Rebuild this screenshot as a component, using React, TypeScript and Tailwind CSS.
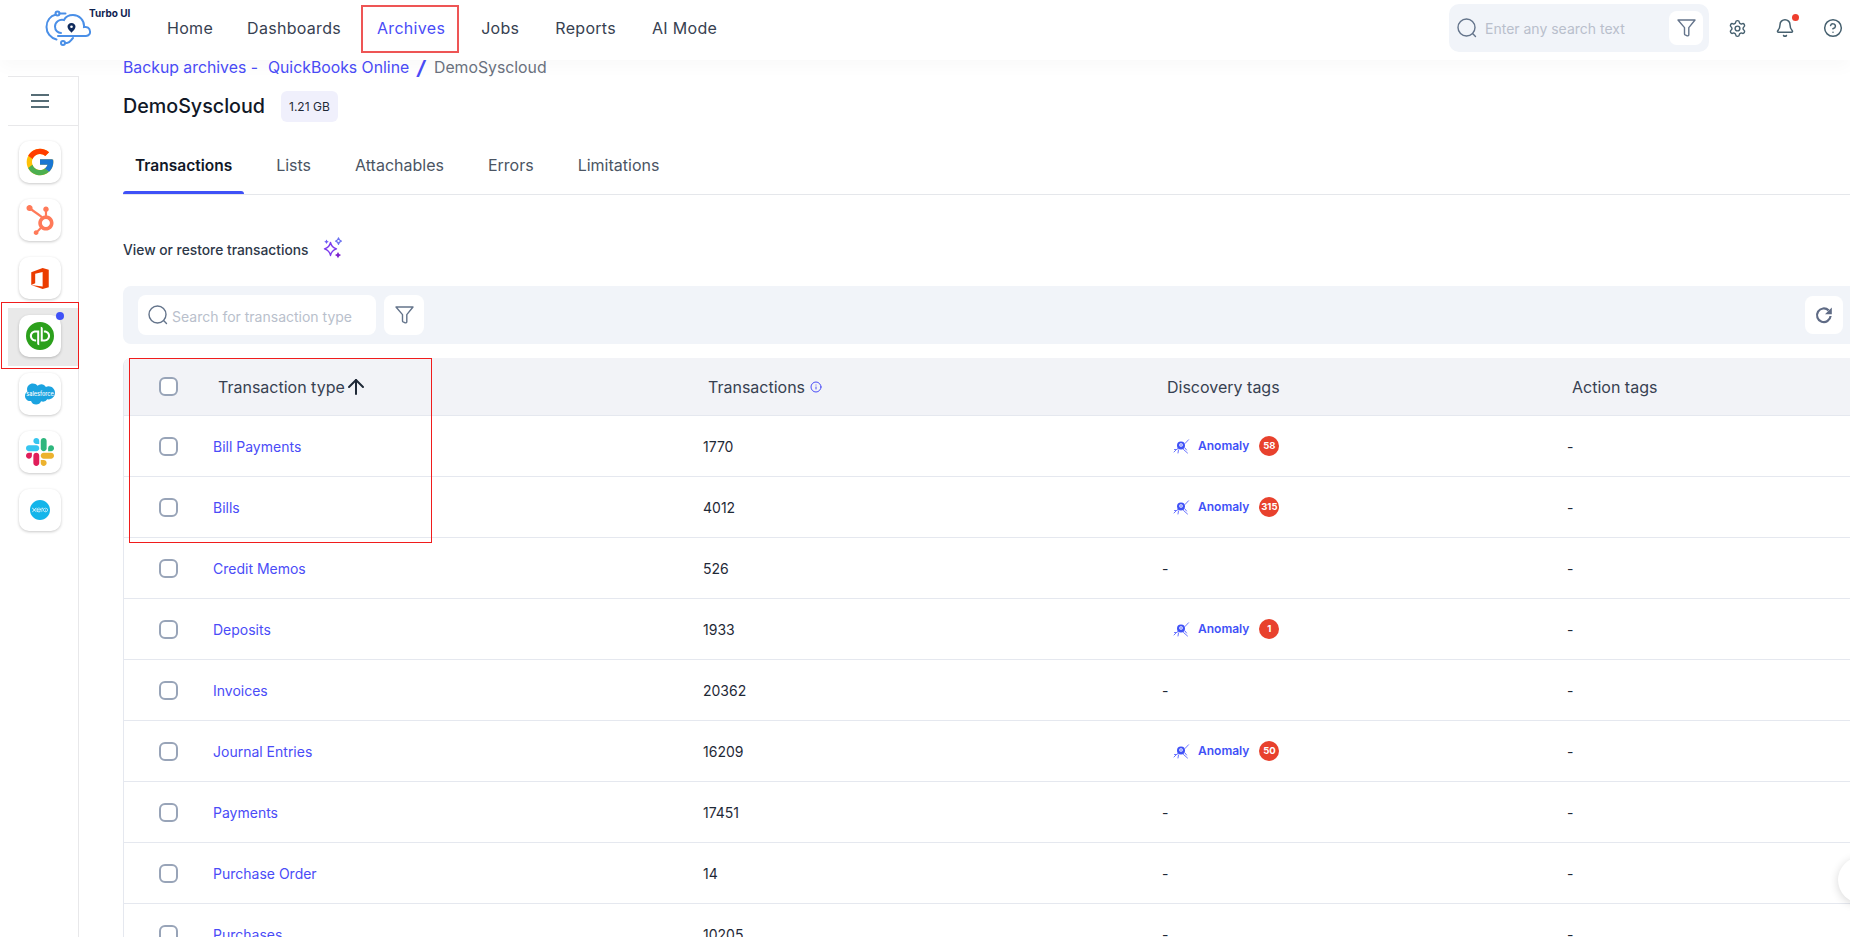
import { ArrowUp, Bell, CircleHelp, Info, Settings } from "lucide-react";
import { FcGoogle } from "react-icons/fc";
import { FaHubspot } from "react-icons/fa";
import { SiQuickbooks, SiSalesforce, SiXero } from "react-icons/si";

const navItems = ["Home", "Dashboards", "Archives", "Jobs", "Reports", "AI Mode"];
const tabs = ["Transactions", "Lists", "Attachables", "Errors", "Limitations"];

const rows = [
  { name: "Bill Payments", count: "1770", anomaly: "58" },
  { name: "Bills", count: "4012", anomaly: "315" },
  { name: "Credit Memos", count: "526" },
  { name: "Deposits", count: "1933", anomaly: "1" },
  { name: "Invoices", count: "20362" },
  { name: "Journal Entries", count: "16209", anomaly: "50" },
  { name: "Payments", count: "17451" },
  { name: "Purchase Order", count: "14" },
  { name: "Purchases", count: "10205" },
];

const SearchIcon = () => (
  <svg width="20" height="20" viewBox="0 0 20 20" fill="none" stroke="#64748b" strokeWidth="1.4" strokeLinecap="round">
    <circle cx="9.5" cy="9.5" r="8.5" />
    <path d="M15.8 15.8 18.5 18.5" />
  </svg>
);

const FunnelIcon = () => (
  <svg width="19" height="18" viewBox="0 0 19 18" fill="none" stroke="#64748b" strokeWidth="1.4" strokeLinejoin="round">
    <path d="M1 1h17l-6.2 7.6v7.2c0 .9-.9 1.2-1.6 1l-2-.9c-.4-.2-.7-.5-.7-1V8.6L1 1z" />
  </svg>
);

const RefreshIcon = () => (
  <svg width="18" height="18" viewBox="0 0 18 18" fill="none" stroke="#5f6b85" strokeWidth="2.2">
    <path d="M13.6 4.4A6.800 6.800 0 1 0 15.600 10" />
    <path d="M16.800 1.500v6.800H10z" fill="#5f6b85" stroke="none" />
  </svg>
);

const TurboLogo = () => (
  <svg width="46" height="38" viewBox="0 0 46 38" fill="none" stroke="#4a8fe7" strokeWidth="2" strokeLinecap="round">
    <path d="M11 5.500C5 7 1.500 12 1.500 18c0 6 4 11 10 12.500" />
    <path d="M13 27h28c3 0 4.500-2.500 4-5-.5-3-3-4.500-6-4 .5-7-5-12-11-12-4 0-7.500 2-9 5-5-1-9 2-9 6.500 0 4 3 6.500 6 6.500" />
    <circle cx="12.500" cy="4.500" r="2" />
    <path d="M14.500 4.500h6" />
    <circle cx="18" cy="34" r="2" />
    <path d="M20 34h2c3 0 4-3 6-5" />
    <path d="M26.500 14c-2.500 0-4 1.800-4 3.800 0 2.200 2.400 4.200 4 6 1.600-1.800 4-3.800 4-6 0-2-1.500-3.800-4-3.800z" fill="#0f2a5c" stroke="none" />
    <circle cx="26.500" cy="17.800" r="1.300" fill="#fff" stroke="none" />
  </svg>
);

const OfficeLogo = () => (
  <svg width="18" height="21" viewBox="0 0 20 24" fill="#eb3c00">
    <path d="M0 19.500V4.800L13 0l7 2v20l-7 2-13-4.500 13 1.700V4.600L4.500 6.500v10.800L0 19.500z" />
  </svg>
);

const SlackLogo = () => (
  <svg width="28" height="28" viewBox="0 0 122.800 122.800">
    <path d="M25.800 77.600c0 7.100-5.800 12.900-12.900 12.900S0 84.700 0 77.600s5.800-12.900 12.900-12.900h12.900v12.900z" fill="#e01e5a" />
    <path d="M32.300 77.600c0-7.100 5.800-12.900 12.900-12.900s12.900 5.800 12.900 12.900v32.300c0 7.100-5.800 12.900-12.900 12.900s-12.900-5.800-12.900-12.900V77.600z" fill="#e01e5a" />
    <path d="M45.200 25.800c-7.100 0-12.900-5.800-12.900-12.900S38.100 0 45.200 0s12.900 5.800 12.900 12.900v12.900H45.200z" fill="#36c5f0" />
    <path d="M45.200 32.300c7.100 0 12.900 5.800 12.900 12.900s-5.800 12.900-12.900 12.900H12.900C5.800 58.100 0 52.300 0 45.200s5.800-12.900 12.900-12.900h32.300z" fill="#36c5f0" />
    <path d="M97 45.200c0-7.100 5.800-12.900 12.900-12.900s12.900 5.800 12.900 12.900-5.800 12.900-12.900 12.900H97V45.200z" fill="#2eb67d" />
    <path d="M90.500 45.200c0 7.100-5.800 12.900-12.900 12.900s-12.900-5.800-12.900-12.900V12.900C64.700 5.800 70.500 0 77.600 0s12.900 5.800 12.900 12.900v32.300z" fill="#2eb67d" />
    <path d="M77.600 97c7.100 0 12.900 5.800 12.900 12.900s-5.800 12.900-12.900 12.900-12.900-5.800-12.900-12.900V97h12.900z" fill="#ecb22e" />
    <path d="M77.600 90.500c-7.100 0-12.900-5.800-12.900-12.900s5.800-12.900 12.900-12.900h32.300c7.100 0 12.900 5.800 12.900 12.900s-5.800 12.900-12.900 12.900H77.600z" fill="#ecb22e" />
  </svg>
);

const Sparkles = () => (
  <svg width="22" height="22" viewBox="0 0 22 22" fill="none" stroke="#7c3aed" strokeWidth="1.400" strokeLinejoin="round">
    <path d="M8.500 5.500c.7 3.600 2.300 5.200 6 6.300-3.700 1.100-5.300 2.800-6 6.700-.7-3.900-2.300-5.600-6-6.700 3.700-1.100 5.300-2.700 6-6.300z" />
    <path d="M16.500 1c.3 1.800 1.100 2.600 2.800 3.100-1.700.5-2.500 1.300-2.800 3.100-.3-1.800-1.100-2.600-2.800-3.100 1.700-.5 2.500-1.300 2.800-3.100z" stroke="#6b72f0" />
    <path d="M4.500 2.500l.8 1.500 1.500.8-1.500.8-.8 1.500-.8-1.500-1.500-.8 1.500-.8z" fill="#6d5cf5" stroke="none" />
    <path d="M16 15l1.100 2 2 1.100-2 1.100-1.100 2-1.100-2-2-1.100 2-1.100z" fill="#7e22ce" stroke="none" />
  </svg>
);

const BugIcon = () => (
  <svg width="17" height="15" viewBox="0 0 17 15" fill="none" stroke="#6a74ff" strokeWidth="1" strokeLinecap="round">
    <circle cx="8" cy="6.500" r="4" fill="#3f51f7" stroke="none" />
    <circle cx="8" cy="6" r="1.800" fill="#fff" stroke="none" />
    <circle cx="8" cy="6" r="0.800" fill="#3f51f7" stroke="none" />
    <path d="M12 4.500 15.500.8M4.500 9.500 1 13M1.500 10.500 4 10.500M5.500 11 5 14M10.500 10.500l4 3.500M12 9l1.500 2" />
  </svg>
);

const CheckBox = () => <span className="block w-[19px] h-[19px] rounded-[6px] border-2 border-[#98a4b8] bg-white" />;

const ConnectorTile = ({ children, dot }: { children: React.ReactNode; dot?: boolean }) => (
  <div className="relative w-[42px] h-[42px] rounded-[10px] bg-white flex items-center justify-center shadow-[0_1px_3px_rgba(0,0,0,0.22)]">
    {children}
    {dot && <span className="absolute -top-[3px] -right-[3px] w-2 h-2 rounded-full bg-[#3f51f7]" />}
  </div>
);

export default function App() {
  return (
    <div className="relative w-full h-[937px] overflow-hidden bg-white flex flex-col font-['Inter',sans-serif] text-[#1f2937]">
      <header className="relative z-10 h-[60px] shrink-0 bg-white flex items-center pb-1 shadow-[0_8px_14px_rgba(0,0,0,0.025)]">
        <div className="relative w-[149px] shrink-0 flex items-center pl-[45px]">
          <TurboLogo />
          <span className="absolute left-[89px] -top-[3px] text-[10px] font-bold text-[#0f2350]">Turbo UI</span>
        </div>
        <nav className="flex items-center">
          {navItems.map((item) => (
            <a
              key={item}
              href="#"
              className={`pl-[18px] text-[16px] tracking-[0.3px] ${item === "Home" ? "pr-[16px]" : "pr-[18px]"} ${item === "Archives" ? "text-[#4a4cf7]" : "text-[#374151]"}`}
            >
              {item}
            </a>
          ))}
        </nav>
        <div className="ml-auto flex items-center">
          <div className="w-[260px] h-[48px] rounded-[10px] bg-[#f1f4f9] flex items-center pl-2 pr-[6px]">
            <SearchIcon />
            <span className="ml-[8px] flex-1 text-[14px] text-[#b9bfcc]">Enter any search text</span>
            <span className="w-[34px] h-[34px] rounded-lg bg-white flex items-center justify-center">
              <FunnelIcon />
            </span>
          </div>
          <div className="ml-[19px] mr-[7px] flex items-center gap-[28px] text-[#46606f]">
            <Settings size={19} strokeWidth={1.8} />
            <Bell size={20} strokeWidth={1.8} />
            <CircleHelp size={20} strokeWidth={1.8} />
          </div>
        </div>
        <span className="absolute left-[1792px] top-[14px] w-[7px] h-[7px] rounded-full bg-[#ef3e2e]" />
      </header>

      <div className="flex flex-1 min-h-0">
        <aside className="ml-2 mt-4 w-[71px] shrink-0 border-t border-r border-[#e8e8ea]">
          <div className="h-[49px] flex items-center justify-center pr-[6px] border-b border-[#e8e8ea]">
            <span className="flex flex-col gap-[4px]">
              <span className="block w-[18px] h-[2px] bg-[#566d76]" />
              <span className="block w-[18px] h-[2px] bg-[#566d76]" />
              <span className="block w-[18px] h-[2px] bg-[#566d76]" />
            </span>
          </div>
          <div className="pt-[8px]">
            <div className="h-[58px] flex items-center justify-center pr-[6px] pb-[2px]">
              <ConnectorTile><FcGoogle size={32} /></ConnectorTile>
            </div>
            <div className="h-[58px] flex items-center justify-center pr-[6px] pb-[2px]">
              <ConnectorTile><FaHubspot size={30} color="#ff7a59" /></ConnectorTile>
            </div>
            <div className="h-[58px] flex items-center justify-center pr-[6px] pb-[2px]">
              <ConnectorTile><OfficeLogo /></ConnectorTile>
            </div>
            <div className="h-[58px] flex items-center justify-center pr-[6px] pb-[2px] bg-[#e9e9e9]">
              <ConnectorTile dot><SiQuickbooks size={28} color="#2ca01c" /></ConnectorTile>
            </div>
            <div className="h-[58px] flex items-center justify-center pr-[6px] pb-[2px]">
              <ConnectorTile>
                <SiSalesforce size={30} color="#1ba3e0" />
                <span className="absolute inset-0 flex items-center justify-center text-[5.500px] font-medium text-white">salesforce</span>
              </ConnectorTile>
            </div>
            <div className="h-[58px] flex items-center justify-center pr-[6px] pb-[2px]">
              <ConnectorTile><SlackLogo /></ConnectorTile>
            </div>
            <div className="h-[58px] flex items-center justify-center pr-[6px] pb-[2px]">
              <ConnectorTile><SiXero size={20} color="#13b5ea" /></ConnectorTile>
            </div>
          </div>
        </aside>

        <main className="flex-1 min-w-0 pl-11">
          <div className="mt-[1px] h-[14px] flex items-center text-[15.800px] leading-[14px] whitespace-nowrap">
            <span className="text-[#4a4cf7]">Backup archives -</span>
            <span className="ml-[10px] text-[#4a4cf7]">QuickBooks Online</span>
            <span className="ml-[8px] text-[20px] font-bold italic text-[#4a4cf7]">/</span>
            <span className="ml-[9px] text-[#6b7280]">DemoSyscloud</span>
          </div>

          <div className="mt-[16px] h-[31px] flex items-center">
            <h1 className="text-[19.700px] font-medium text-[#111827]">DemoSyscloud</h1>
            <span className="ml-4 h-[31px] px-2 rounded-md bg-[#f0f0fc] flex items-center text-[12px] text-[#1f2937]">1.21 GB</span>
          </div>

          <div className="mt-[14px] h-[59px] flex border-b border-[#e5e7eb]">
            {tabs.map((tab, i) => (
              <div
                key={tab}
                className={`relative h-[58px] px-3 mr-5 flex items-center ${i === 0 ? "pt-[2px] text-[15.500px] font-semibold text-[#111827]" : "text-[16px] text-[#4b5563]"}`}
              >
                {tab}
                {i === 0 && <span className="absolute left-0 right-0 bottom-0 h-[3px] rounded-t bg-[#3f51f7]" />}
              </div>
            ))}
          </div>

          <div className="mt-[43px] h-6 flex items-center">
            <span className="text-[13.800px] font-medium text-[#2d3748]">View or restore transactions</span>
            <span className="ml-[13px] -mt-1"><Sparkles /></span>
          </div>

          <div className="mt-6 h-[58px] rounded-l-lg bg-[#f1f4f9] flex items-center pl-[15px] pr-[7px]">
            <div className="w-[238px] h-10 rounded-lg bg-white flex items-center pl-[10px]">
              <SearchIcon />
              <span className="ml-[4px] pt-[2px] text-[14px] text-[#b9bfcc]">Search for transaction type</span>
            </div>
            <span className="ml-2 w-10 h-10 rounded-lg bg-white flex items-center justify-center">
              <FunnelIcon />
            </span>
            <span className="ml-auto w-[38px] h-[38px] rounded-lg bg-white flex items-center justify-center">
              <RefreshIcon />
            </span>
          </div>

          <div className="mt-[14px] border-l border-[#e5e8ef] rounded-tl-lg">
            <div className="grid grid-cols-[89px_490px_459px_405px_1fr] items-center h-[58px] bg-[#f2f3f7] border-b border-[#e5e8ef] text-[16px] text-[#374151] rounded-tl-lg">
              <div className="pl-[35px]"><CheckBox /></div>
              <div className="pl-[5px] flex items-center">
                Transaction type
                <ArrowUp size={24} strokeWidth={2} className="-ml-[1px] text-[#1f2937]" />
              </div>
              <div className="pl-[5px] flex items-center">
                Transactions
                <Info size={12} strokeWidth={2} className="ml-[5px] text-[#4a4cf7]" />
              </div>
              <div className="pl-[5px]">Discovery tags</div>
              <div className="pl-[5px]">Action tags</div>
            </div>

            {rows.map((row) => (
              <div
                key={row.name}
                className="grid grid-cols-[89px_490px_459px_405px_1fr] items-center h-[61px] border-b border-[#e5e8ef] text-[14px]"
              >
                <div className="pl-[35px]"><CheckBox /></div>
                <a href="#" className="text-[#4a4cf7]">{row.name}</a>
                <div>{row.count}</div>
                <div>
                  {row.anomaly ? (
                    <div className="pl-[11px] flex items-center">
                      <BugIcon />
                      <span className="ml-2 text-[12px] font-semibold text-[#3f51f7]">Anomaly</span>
                      <span className="ml-[10px] w-5 h-5 rounded-full bg-[#e8412d] flex items-center justify-center text-[9.500px] font-bold text-white">
                        {row.anomaly}
                      </span>
                    </div>
                  ) : (
                    "-"
                  )}
                </div>
                <div>-</div>
              </div>
            ))}
          </div>
        </main>
      </div>

      {/* review highlights sitting over the page */}
      <div className="absolute left-[361px] top-[5px] w-[98px] h-[48px] border-2 border-[#ee5555] z-20" />
      <div className="absolute left-[1px] top-[302px] w-[78px] h-[67px] border-[1.5px] border-[#f01c1c] z-20" />
      <div className="absolute left-[129px] top-[358px] w-[303px] h-[185px] border-[1.5px] border-[#f01c1c] z-20" />

      <div className="absolute left-[1838px] top-[857px] w-[46px] h-[46px] rounded-full bg-white shadow-[0_2px_10px_rgba(0,0,0,0.16)] z-20" />
    </div>
  );
}
